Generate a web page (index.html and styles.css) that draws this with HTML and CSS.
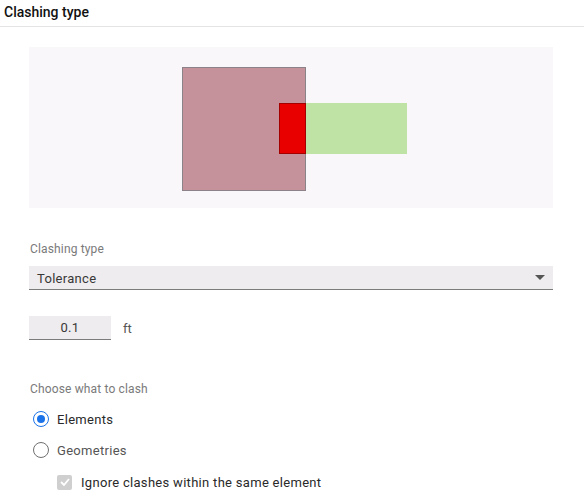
FILE: index.html
```html
<!DOCTYPE html>
<html>
<head>
<meta charset="utf-8">
<link rel="stylesheet" href="styles.css">
</head>
<body>
<div class="header">Clashing type</div>
<div class="content">
  <div class="canvas">
    <svg width="524" height="161" viewBox="0 0 524 161">
      <rect x="153.5" y="20.5" width="123" height="123" fill="#c5929b" stroke="#8c8389" stroke-width="1"/>
      <rect x="276" y="56" width="102" height="51" fill="#bfe2a5"/>
      <rect x="250.5" y="56.5" width="26" height="50" fill="#e80000" stroke="#a30000" stroke-width="1"/>
    </svg>
  </div>
  <div class="label first">Clashing type</div>
  <div class="select">
    <span>Tolerance</span>
    <svg class="arrow" width="10" height="5" viewBox="0 0 10 5"><path d="M0 0 L10 0 L5 5 Z" fill="#555"/></svg>
  </div>
  <div class="tol-row">
    <div class="tol-input">0.1</div>
    <span class="unit">ft</span>
  </div>
  <div class="label second">Choose what to clash</div>
  <div class="option first-opt">
    <span class="radio checked"></span>
    <span>Elements</span>
  </div>
  <div class="option">
    <span class="radio"></span>
    <span class="muted">Geometries</span>
  </div>
  <div class="option check-opt">
    <span class="checkbox">
      <svg width="10" height="8" viewBox="0 0 10 8"><path d="M1 4 L4 7 L9 1" fill="none" stroke="#fff" stroke-width="1.8"/></svg>
    </span>
    <span>Ignore clashes within the same element</span>
  </div>
</div>
</body>
</html>
```
FILE: styles.css
```css
body {
  margin: 0;
  font-family: Roboto, "Noto Sans", sans-serif;
  color: #222;
  background: #fff;
}
.header {
  height: 26px;
  line-height: 24px;
  padding-left: 4px;
  font-size: 14px;
  font-weight: 500;
  color: #111;
  border-bottom: 1px solid #e4e4e4;
}
.content {
  padding-left: 29px;
}
.canvas {
  margin-top: 20px;
  width: 524px;
  height: 161px;
  background: #faf7fb;
}
.canvas svg {
  display: block;
}
.label {
  font-size: 12px;
  line-height: 16px;
  letter-spacing: 0.15px;
  color: #7a7a7a;
  padding-left: 1px;
}
.label.first {
  margin-top: 33px;
}
.label.second {
  margin-top: 41px;
}
.select {
  margin-top: 9px;
  width: 524px;
  height: 24px;
  box-sizing: border-box;
  background: #eeecee;
  border-bottom: 1px solid #7b7b7b;
  display: flex;
  align-items: center;
  justify-content: space-between;
  padding: 0 8px 0 8px;
  font-size: 13px;
  letter-spacing: 0.3px;
  color: #383838;
}
.select span {
  padding-top: 1px;
}
.arrow {
  display: block;
}
.tol-row {
  margin-top: 26px;
  display: flex;
  align-items: center;
}
.tol-input {
  width: 82px;
  height: 24px;
  box-sizing: border-box;
  background: #eeecee;
  border-bottom: 1px solid #7b7b7b;
  text-align: center;
  font-size: 13px;
  letter-spacing: 0.3px;
  line-height: 24px;
  color: #383838;
}
.unit {
  margin-left: 12px;
  font-size: 13px;
  color: #555;
}
.option {
  display: flex;
  align-items: center;
  height: 24px;
  margin-top: 7px;
  font-size: 13px;
  letter-spacing: 0.3px;
  color: #2a2a2a;
}
.option.first-opt {
  margin-top: 10px;
}
.option.check-opt {
  margin-top: 8px;
  padding-left: 28px;
}
.muted {
  color: #555;
}
.radio {
  width: 16px;
  height: 16px;
  box-sizing: border-box;
  border: 1.5px solid #6f6f6f;
  border-radius: 50%;
  margin-left: 4px;
  margin-right: 8px;
  position: relative;
}
.radio.checked {
  border-color: #1a73e8;
}
.radio.checked::after {
  content: "";
  position: absolute;
  left: 2.5px;
  top: 2.5px;
  width: 8px;
  height: 8px;
  border-radius: 50%;
  background: #1a73e8;
}
.checkbox {
  width: 15px;
  height: 15px;
  border-radius: 2px;
  background: #cfcfcf;
  display: flex;
  align-items: center;
  justify-content: center;
  margin-right: 9px;
}
```
